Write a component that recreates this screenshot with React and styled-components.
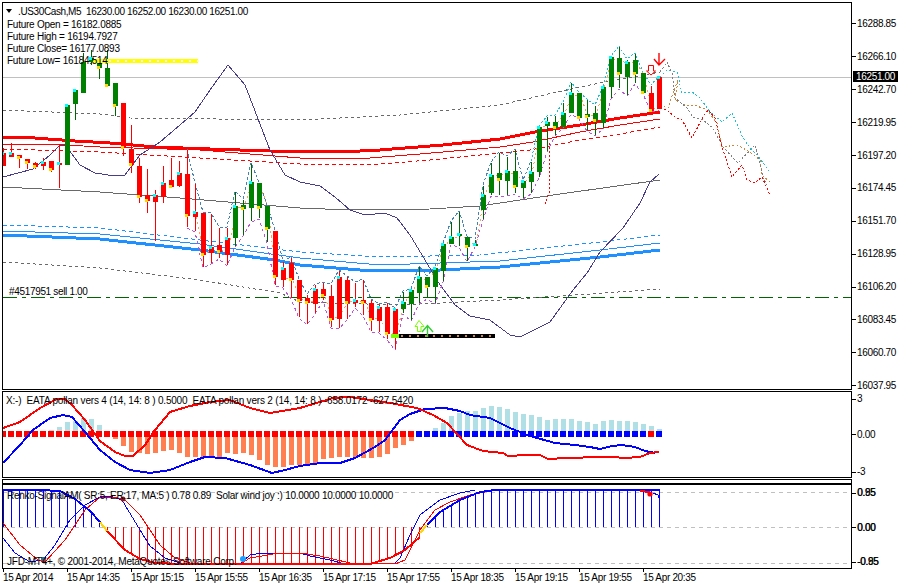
import styled, { createGlobalStyle } from "styled-components";

const GlobalStyle = createGlobalStyle`
  html, body {
    margin: 0;
    background: #fff;
  }
`;

const Page = styled.div`
  width: 898px;
  height: 586px;
  padding: 2px 0 0 2px;
  box-sizing: border-box;
  overflow: hidden;
  background: #fff;
  color: #000;
  font-family: "Liberation Sans", Arial, sans-serif;
  font-size: 10px;
  letter-spacing: -0.33px;
  line-height: 12px;
`;
const Row = styled.div`
  display: flex;
  height: ${(props) => props.$height}px;
  margin-bottom: ${(props) => props.$gap}px;
`;
const Pane = styled.div`
  position: relative;
  width: 850px;
  box-sizing: border-box;
  border: 1px solid #000;
  overflow: hidden;
`;
const Drawing = styled.svg`
  display: block;
  shape-rendering: crispEdges;
`;
const Smooth = styled.g`
  shape-rendering: auto;
`;
const Legend = styled.div`
  position: absolute;
  left: 4px;
  top: 16px;
  white-space: pre;
  letter-spacing: -0.25px;
`;
const Title = styled.div`
  position: absolute;
  left: 15px;
  top: 3px;
  white-space: pre;
  letter-spacing: -0.38px;
`;
const Triangle = styled.i`
  position: absolute;
  left: 3px;
  top: 6px;
  border-style: solid;
  border-width: 4px 3.5px 0;
  border-color: #000 transparent transparent;
`;
const OrderLabel = styled.div`
  position: absolute;
  left: 6px;
  top: 283px;
  white-space: pre;
`;
const Caption = styled.div`
  position: absolute;
  left: ${(props) => props.$left}px;
  top: ${(props) => props.$top}px;
  white-space: pre;
  letter-spacing: ${(props) => props.$track}px;
`;
const PriceAxis = styled.div`
  position: relative;
  flex: 1;
  padding-top: 5.5px;
`;
const PriceTick = styled.div`
  display: flex;
  align-items: center;
  height: 32.9px;
`;
const ScaleAxis = styled.div`
  position: relative;
  flex: 1;
  display: flex;
  flex-direction: column;
  justify-content: space-between;
  padding: ${(props) => props.$top}px 0 ${(props) => props.$bottom}px;
`;
const ScaleTick = styled.div`
  position: relative;
  display: flex;
  align-items: center;
  height: 12px;
  margin-bottom: ${(props) => props.$lift || 0}px;
`;
const Notch = styled.i`
  width: 4px;
  height: 1px;
  margin-right: 1px;
  background: #000;
`;
const Ghost = styled.span`
  position: absolute;
  left: 5.5px;
`;
const PriceTag = styled.div`
  position: absolute;
  left: 1px;
  top: 69px;
  width: 42px;
  height: 11px;
  padding-left: 3px;
  background: #000;
  color: #fff;
  line-height: 11px;
`;
const TimeAxis = styled.div`
  display: flex;
  padding-left: 1px;
`;
const TimeCell = styled.div`
  flex: 0 0 64px;
  white-space: nowrap;
  position: relative;
  padding-top: 3px;
  &::before {
    content: "";
    position: absolute;
    left: 0;
    top: 0;
    width: 1px;
    height: 3px;
    background: #000;
  }
`;

// body top, body bottom, high, low, colour, marker (c cyan at top, y yellow at bottom)
const candles = [
  [153, 166, 148, 166, "r", "c"], [153, 157, 143, 157, "r", "c"], [155, 158, 155, 168, "r", "y"],
  [159, 163, 159, 169, "r", "y"], [163, 167, 162, 169, "r", "y"], [162, 166, 158, 170, "r", "c"],
  [161, 170, 161, 172, "r", "y"], [163, 165, 144, 188, "r", "c"], [105, 165, 105, 165, "g", "c"],
  [90, 104, 90, 120, "g", "c"], [62, 93, 53, 93, "g", ""], [58, 62, 50, 65, "g", "c"],
  [59, 68, 59, 79, "g", "y"], [68, 86, 50, 86, "g", "y"], [83, 106, 83, 116, "g", "y"],
  [103, 148, 103, 156, "r", "y"], [149, 165, 125, 173, "r", "y"], [166, 197, 158, 203, "r", "y"],
  [195, 201, 169, 213, "r", "y"], [195, 202, 190, 241, "r", "c"], [183, 197, 166, 203, "r", "c"],
  [180, 187, 158, 187, "r", "y"], [173, 186, 161, 187, "r", "c"], [174, 216, 150, 227, "r", "y"],
  [212, 217, 184, 231, "r", "c"], [213, 255, 213, 267, "r", "y"], [247, 253, 214, 263, "r", "c"],
  [245, 252, 228, 258, "r", "y"], [238, 255, 228, 265, "r", "c"], [206, 238, 192, 246, "g", "c"],
  [205, 209, 200, 235, "g", "y"], [182, 208, 164, 221, "g", "c"], [183, 208, 183, 218, "g", "y"],
  [206, 229, 206, 242, "g", "y"], [231, 277, 231, 285, "r", "y"], [268, 280, 262, 287, "r", "c"],
  [263, 280, 258, 298, "r", "y"], [280, 301, 280, 317, "r", "y"], [298, 303, 295, 324, "r", "y"],
  [289, 304, 285, 313, "r", "c"], [289, 296, 283, 300, "r", "y"], [296, 320, 285, 327, "r", "y"],
  [277, 319, 271, 328, "r", "c"], [280, 303, 277, 319, "r", "y"], [300, 303, 283, 307, "r", "c"],
  [300, 303, 280, 315, "r", "y"], [303, 320, 300, 331, "r", "y"], [307, 321, 305, 332, "r", "c"],
  [307, 334, 303, 339, "r", "y"], [309, 337, 309, 349, "r", "c"], [302, 309, 292, 313, "g", "c"],
  [290, 304, 290, 320, "g", "c"], [277, 293, 267, 303, "g", "c"], [277, 287, 277, 298, "g", "y"],
  [268, 287, 268, 303, "g", "c"], [244, 271, 244, 281, "g", "c"], [237, 244, 222, 244, "g", "c"],
  [234, 236, 212, 246, "g", "c"], [237, 247, 237, 261, "g", "y"], [244, 246, 240, 246, "g", "c"],
  [195, 210, 186, 219, "g", "c"], [175, 193, 163, 195, "g", "c"], [173, 180, 153, 195, "g", "y"],
  [171, 181, 157, 195, "g", "c"], [171, 187, 150, 193, "g", "y"], [181, 188, 181, 198, "g", "c"],
  [172, 182, 162, 193, "g", "c"], [127, 172, 127, 177, "g", "c"], [122, 126, 117, 151, "g", "c"],
  [122, 128, 116, 135, "g", "y"], [113, 127, 103, 127, "g", "c"], [93, 113, 83, 113, "g", "c"],
  [93, 118, 93, 118, "g", "y"], [114, 117, 100, 130, "g", "y"], [113, 121, 106, 135, "g", "y"],
  [87, 123, 87, 128, "g", "c"], [57, 87, 57, 98, "g", "c"], [58, 74, 47, 88, "g", "y"],
  [62, 77, 60, 95, "g", "c"], [60, 74, 54, 83, "g", "y"], [73, 93, 73, 93, "g", "y"],
  [93, 111, 86, 111, "r", "y"], [77, 109, 77, 109, "r", "c"],
];

const barX = (k) => 3 + 8 * k;
const pts = (list) => list.map((p) => p.join(",")).join(" ");

const thickRed = [[3, 137], [35, 138], [75, 141], [110, 143], [155, 147], [210, 149], [270, 151], [340, 152], [380, 150], [443, 145], [500, 139], [540, 131], [580, 125], [620, 118], [660, 112]];
const thinRed = [[3, 144], [50, 144], [100, 147], [200, 150], [300, 158], [370, 158], [420, 154], [500, 147], [533, 142], [580, 132], [620, 125], [660, 119]];
const dashRed = [[3, 149], [100, 152], [200, 158], [300, 164], [380, 164], [430, 160], [530, 150], [580, 140], [620, 134], [660, 127]];
const greyLine = [[3, 187], [100, 192], [180, 198], [300, 208], [350, 210], [430, 209], [480, 206], [560, 194], [610, 187], [660, 180]];
const greyUpper = [[3, 110], [100, 114], [130, 118], [300, 120], [400, 115], [500, 105], [557, 92], [600, 83], [660, 72]];
const greyLower = [[3, 262], [100, 268], [200, 280], [280, 293], [300, 302], [400, 305], [500, 300], [590, 294], [660, 289]];
const blueThick = [[3, 235], [100, 239], [200, 250], [275, 260], [300, 265], [360, 270], [440, 270], [500, 267], [600, 257], [660, 250]];
const blueThin = [[3, 231], [100, 234], [200, 244], [300, 258], [380, 265], [500, 261], [600, 250], [660, 243]];
const blueDash = [[3, 225], [100, 228], [200, 240], [300, 252], [380, 257], [480, 255], [600, 242], [660, 235]];
const purple = [[3, 177], [33, 169], [50, 155], [60, 145], [66, 146], [80, 165], [95, 173], [115, 176], [125, 175], [140, 155], [160, 142], [180, 125], [195, 112], [210, 90], [228, 65], [245, 85], [270, 150], [285, 175], [300, 182], [320, 186], [335, 197], [350, 210], [365, 215], [385, 213], [397, 218], [410, 235], [425, 260], [440, 285], [455, 305], [470, 316], [490, 320], [510, 335], [520, 337], [550, 322], [573, 290], [587, 273], [600, 252], [623, 228], [640, 203], [650, 182], [659, 174]];

const toPage = (list) => list.map(([x, y]) => [Math.round(560 + x / 3), Math.round(30 + y / 3)]);
const futureCyan = toPage([[300, 140], [320, 120], [350, 125], [365, 190], [395, 185], [420, 205], [450, 245], [485, 275], [515, 250], [550, 325], [575, 360], [590, 375], [630, 425]]);
const futureOrange = toPage([[300, 225], [325, 235], [340, 190], [355, 150], [345, 210], [375, 225], [410, 228], [440, 240], [470, 280], [487, 352], [530, 345], [570, 365], [600, 390], [605, 435], [632, 460]]);
const futureGrey = toPage([[300, 125], [320, 95], [335, 130], [345, 205], [380, 235], [400, 262], [430, 270], [460, 295], [490, 350], [535, 400], [585, 345], [600, 400], [610, 445], [625, 470]]);
const futureRed = toPage([[300, 235], [320, 240], [345, 260], [365, 270], [395, 325], [430, 260], [445, 240], [465, 265], [490, 360], [515, 440], [545, 405], [560, 450], [585, 458], [605, 440], [630, 495]]);

const highZig = candles.map((c, k) => [barX(k), c[2] - 1]).slice(23);
const lowZig = candles.map((c, k) => [barX(k), c[3] + 1]).slice(23);
const closeZig = candles.map((c, k) => [barX(k) + 1, c[4] === "g" ? c[0] + 2 : c[1] - 2]).slice(23);

const Price = () => (
  <Drawing width="848" height="386" viewBox="3 3 848 386">
    <line x1="3" y1="77.5" x2="851" y2="77.5" stroke="#c0c0c0" />
    <line x1="3" y1="297.5" x2="851" y2="297.5" stroke="#006400" strokeDasharray="14 5 4 5" />
    <polyline points={pts(thickRed)} fill="none" stroke="#ff0000" strokeWidth="3" />
    <polyline points={pts(thinRed)} fill="none" stroke="#ff0000" />
    <polyline points={pts(dashRed)} fill="none" stroke="#ff0000" strokeDasharray="4 3" />
    <polyline points={pts(greyLine)} fill="none" stroke="#696969" />
    <polyline points={pts(greyUpper)} fill="none" stroke="#696969" strokeDasharray="3 3" />
    <polyline points={pts(greyLower)} fill="none" stroke="#696969" strokeDasharray="3 3" />
    <polyline points={pts(blueThick)} fill="none" stroke="#1e90ff" strokeWidth="3" />
    <polyline points={pts(blueThin)} fill="none" stroke="#1e90ff" />
    <polyline points={pts(blueDash)} fill="none" stroke="#1e90ff" strokeDasharray="4 3" />
    <polyline points={pts(purple)} fill="none" stroke="#483d8b" />
    <polyline points={pts(highZig.slice(0, 44))} fill="none" stroke="#4682b4" strokeDasharray="3 2" />
    <polyline points={pts(highZig.slice(43))} fill="none" stroke="#20c0d0" strokeDasharray="2 2" />
    <polyline points={pts(lowZig)} fill="none" stroke="#ba55d3" strokeDasharray="3 3" />
    <polyline points={pts(closeZig)} fill="none" stroke="#f4a460" strokeDasharray="2 3" />
    <polyline points="550,143 549,193 545,205" fill="none" stroke="#ff0000" strokeDasharray="2 2" />
    <polyline points={pts(futureCyan)} fill="none" stroke="#20c0d0" strokeDasharray="2 2" />
    <polyline points={pts(futureOrange)} fill="none" stroke="#cd853f" strokeDasharray="2 2" />
    <polyline points={pts(futureGrey)} fill="none" stroke="#808080" strokeDasharray="2 2" />
    <polyline points={pts(futureRed)} fill="none" stroke="#ff0000" strokeDasharray="2 2" />
    {candles.map(([top, bottom, high, low, colour, mark], k) => {
      const x = barX(k);
      const fill = colour === "g" ? "#008000" : "#ff0000";
      return (
        <g key={k}>
          <rect x={x} y={high} width="1" height={low - high} fill={colour === "g" ? "#006400" : fill} />
          <rect x={x - 2} y={top} width="5" height={bottom - top} fill={fill} />
          {mark === "c" && <rect x={x - 2} y={top - 1} width="3" height="3" fill="#00ffff" />}
          {mark === "y" && <rect x={x - 2} y={bottom - 2} width="3" height="3" fill="#ffd700" />}
        </g>
      );
    })}
    <rect x="93" y="59" width="105" height="4" fill="#ffff00" />
    {Array.from({ length: 13 }, (_, i) => (
      <rect key={i} x={101 + 8 * i} y="60" width="2" height="2" fill="#fffbd0" />
    ))}
    <rect x="391" y="334" width="8" height="4" fill="#7cfc00" />
    <rect x="399" y="334" width="96" height="4" fill="#000" />
    {Array.from({ length: 12 }, (_, i) => (
      <rect key={i} x={401 + 8 * i} y="335" width="2" height="2" fill="#d2864a" />
    ))}
    <Smooth>
      <path d="M415 326.5 L419 320.5 L424 326.5 H421 V331.5 H417.5 V326.5 Z" fill="#fff" stroke="#7cfc00" />
      <path d="M427.5 337 V326 M422 332 L427.5 325.5 L433 332" fill="none" stroke="#32cd32" strokeWidth="1.4" />
      <path d="M659 53 V64 M654 59 L659 65 L665 59" fill="none" stroke="#ff0000" strokeWidth="1.4" />
      <path d="M648.5 65.5 H653.5 V71 H655.5 L651 75 L646.5 71 H648.5 Z" fill="#fff" stroke="#ff0000" />
    </Smooth>
  </Drawing>
);

const osc = [0, 0, 0, 0, 0, 0, 430, 427, 422, 421, 418, 419, 425, 433, 439, 446, 452, 453, 454, 453, 451, 450, 453, 457, 457, 458, 456, 457, 453, 454, 453, 455, 460, 465, 467, 467, 465, 465, 465, 463, 459, 458, 457, 457, 458, 458, 458, 457, 454, 448, 445, 441, 433, 433, 428, 423, 416, 413, 411, 411, 408, 406, 407, 409, 412, 414, 415, 417, 420, 419, 419, 419, 421, 422, 424, 421, 420, 421, 421, 422, 424, 426, 429];
const oscRed = [[3, 428], [20, 422], [40, 408], [57, 399], [65, 399], [72, 405], [85, 420], [100, 441], [115, 452], [125, 456], [133, 456], [145, 445], [155, 430], [170, 412], [190, 406], [210, 402], [230, 400], [250, 408], [270, 413], [300, 408], [333, 398], [350, 397], [370, 400], [390, 403], [417, 408], [433, 415], [447, 423], [467, 445], [483, 451], [503, 453], [508, 456], [527, 455], [540, 455], [548, 459], [567, 458], [600, 457], [612, 457], [625, 458], [640, 457], [650, 453], [659, 452]];
const oscBlue = [[3, 463], [20, 445], [33, 430], [50, 418], [63, 415], [72, 417], [85, 432], [100, 450], [115, 462], [130, 470], [150, 473], [170, 470], [190, 462], [205, 457], [225, 458], [250, 465], [272, 473], [285, 470], [300, 466], [320, 463], [340, 463], [355, 458], [375, 447], [385, 440], [400, 420], [410, 414], [425, 409], [445, 408], [460, 411], [470, 415], [490, 418], [510, 428], [530, 436], [555, 443], [575, 445], [590, 447], [600, 449], [612, 446], [622, 445], [635, 447], [645, 451], [655, 453]];

const Oscillator = () => (
  <Drawing width="848" height="85" viewBox="3 392 848 85">
    {osc.map((y, k) =>
      y === 0 || y === 433 ? null : (
        <rect
          key={k}
          x={barX(k) - 2}
          y={Math.min(y, 433)}
          width="5"
          height={Math.abs(y - 433)}
          fill={y < 433 ? "#b0e0e6" : "#ff7f50"}
        />
      )
    )}
    {osc.map((_, k) => (
      <rect key={k} x={barX(k) - 3} y="431" width="6" height="6" fill={k < 52 || k === 81 ? "#ff0000" : "#0000ff"} />
    ))}
    <polyline points={pts(oscBlue)} fill="none" stroke="#0000ff" strokeWidth="2" />
    <polyline points={pts(oscRed)} fill="none" stroke="#ff0000" strokeWidth="2" />
  </Drawing>
);

const signalBlue = [[3, 490], [40, 490], [60, 491], [75, 499], [90, 511], [100, 522]];
const signalRed = [[107, 531], [125, 550], [140, 559], [155, 563], [180, 564], [370, 564], [390, 558], [405, 550], [420, 537]];
const signalBlue2 = [[427, 525], [440, 512], [460, 500], [480, 492], [495, 490], [660, 490]];
const fastBlue = [[3, 538], [15, 553], [30, 562], [43, 560], [55, 545], [70, 520], [85, 505], [100, 497], [110, 496], [122, 500], [140, 530], [150, 546], [165, 558], [180, 563], [240, 564], [250, 555], [262, 553], [278, 553], [300, 553], [310, 556], [330, 560], [345, 564], [395, 563], [400, 558], [410, 535], [420, 515], [440, 500], [460, 493], [475, 490]];
const fastRed = [[3, 523], [20, 545], [38, 560], [45, 562], [65, 540], [85, 510], [100, 497], [115, 497], [125, 500], [140, 515], [160, 545], [175, 558], [190, 563], [240, 564], [250, 558], [262, 556], [278, 553], [300, 553], [320, 556], [350, 563], [395, 564], [405, 560], [420, 530], [435, 510], [450, 502], [470, 495], [490, 491]];

const interpolate = (line, x) => {
  for (let i = 1; i < line.length; i++) {
    if (x <= line[i][0]) {
      const [x0, y0] = line[i - 1];
      const [x1, y1] = line[i];
      return y0 + ((y1 - y0) * (x - x0)) / (x1 - x0);
    }
  }
  return line[line.length - 1][1];
};

const Renko = () => (
  <Drawing width="848" height="83" viewBox="3 485 848 83">
    {[492, 527, 563].map((y) => (
      <line key={y} x1="3" y1={y + 0.5} x2="851" y2={y + 0.5} stroke="#c0c0c0" strokeDasharray="4 4" />
    ))}
    {candles.map((_, k) => {
      const x = barX(k);
      if (k <= 12) return <rect key={k} x={x} y={interpolate(signalBlue, x)} width="1" height={527 - interpolate(signalBlue, x)} fill="#0000ff" />;
      if (k <= 52) return <rect key={k} x={x} y="527" width="1" height={interpolate(signalRed, x) - 527} fill="#ff0000" />;
      return <rect key={k} x={x} y={interpolate(signalBlue2, x)} width="1" height={527 - interpolate(signalBlue2, x)} fill="#0000ff" />;
    })}
    <polyline points={pts(fastBlue)} fill="none" stroke="#0000ff" />
    <polyline points={pts(fastRed)} fill="none" stroke="#ff0000" />
    <polyline points={pts(signalBlue)} fill="none" stroke="#0000ff" strokeWidth="2" />
    <polyline points="100,522 107,531" fill="none" stroke="#ffd700" strokeWidth="2" />
    <polyline points={pts(signalRed)} fill="none" stroke="#ff0000" strokeWidth="2" />
    <polyline points="420,533 427,525" fill="none" stroke="#ffd700" strokeWidth="2" />
    <polyline points={pts(signalBlue2)} fill="none" stroke="#0000ff" strokeWidth="2" />
    <polyline points="640,491 650,492" fill="none" stroke="#ff0000" strokeWidth="2" />
    <polyline points="653,493 658,495 659,498" fill="none" stroke="#0000ff" />
    <Smooth>
      <circle cx="650" cy="494" r="2.6" fill="#ff0000" />
      <circle cx="123" cy="499" r="2.5" fill="#8b1a1a" />
      <rect x="41" y="557" width="4" height="4" fill="#2f6f8f" />
      <circle cx="243" cy="559" r="3" fill="#1e9fff" />
    </Smooth>
  </Drawing>
);

const priceLabels = ["16288.85", "16266.10", "16242.70", "16219.95", "16197.20", "16174.45", "16151.70", "16128.95", "16106.20", "16083.45", "16060.70", "16037.95"];
const timeLabels = ["2014", "14:35", "15:15", "15:55", "16:35", "17:15", "17:55", "18:35", "19:15", "19:55", "20:35"];

export default function App() {
  return (
    <Page>
      <GlobalStyle />
      <Row $height={388} $gap={1}>
        <Pane>
          <Price />
          <Triangle />
          <Title>{".US30Cash,M5  16230.00 16252.00 16230.00 16251.00"}</Title>
          <Legend>
            <div>Future Open = 16182.0885</div>
            <div>Future High = 16194.7927</div>
            <div>Future Close= 16177.0893</div>
            <div>Future Low= 16184.514</div>
          </Legend>
          <OrderLabel>#4517951 sell 1.00</OrderLabel>
        </Pane>
        <PriceAxis>
          {priceLabels.map((label) => (
            <PriceTick key={label}>
              <Notch />
              {label}
            </PriceTick>
          ))}
          <PriceTag>16251.00</PriceTag>
        </PriceAxis>
      </Row>
      <Row $height={87} $gap={1}>
        <Pane>
          <Oscillator />
          <Caption $left={3} $top={3} $track={-0.19}>
            {"X:-)  EATA pollan vers 4 (14, 14: 8 ) 0.5000  EATA pollan vers 2 (14, 14: 8 ) -658.0172 -627.5420"}
          </Caption>
        </Pane>
        <ScaleAxis $top={2} $bottom={0}>
          <ScaleTick><Notch />3</ScaleTick>
          <ScaleTick $lift={2}><Notch />0.00</ScaleTick>
          <ScaleTick><Notch />-3</ScaleTick>
        </ScaleAxis>
      </Row>
      <Row $height={5} $gap={0}>
        <Pane />
      </Row>
      <Row $height={85} $gap={0}>
        <Pane>
          <Renko />
          <Caption $left={4} $top={5} $track={-0.27}>
            {"Renko-SignalAM( SR:5, ER:17, MA:5 ) 0.78 0.89  Solar wind joy :) 10.0000 10.0000 10.0000"}
          </Caption>
          <Caption $left={4} $top={71} $track={-0.23}>
            {"JFD-MT4+, © 2001-2014, MetaQuotes Software Corp."}
          </Caption>
        </Pane>
        <ScaleAxis $top={3} $bottom={1}>
          <ScaleTick><Ghost>0.85</Ghost><Notch />0.95</ScaleTick>
          <ScaleTick><Ghost>0.00</Ghost><Notch />0.00</ScaleTick>
          <ScaleTick><Ghost>-0.85</Ghost><Notch />-0.95</ScaleTick>
        </ScaleAxis>
      </Row>
      <TimeAxis>
        {timeLabels.map((label) => (
          <TimeCell key={label}>15 Apr {label}</TimeCell>
        ))}
      </TimeAxis>
    </Page>
  );
}
